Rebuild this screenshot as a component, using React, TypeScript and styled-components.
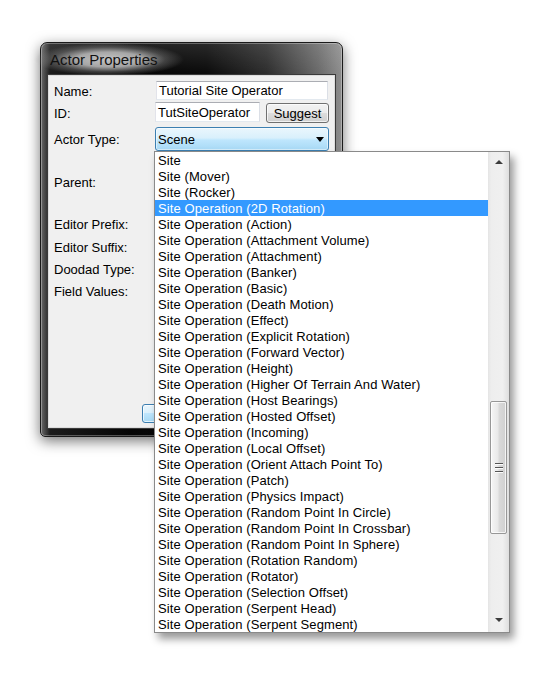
import React from "react";
import styled, { createGlobalStyle } from "styled-components";

const GlobalStyle = createGlobalStyle`
  html, body { margin: 0; padding: 0; background: #fff; }
  body {
    font-family: "Liberation Sans", Arial, sans-serif;
    font-size: 13px;
    color: #000;
  }
`;

const Desktop = styled.div`
  width: 550px;
  height: 675px;
  box-sizing: border-box;
  padding: 42px 0 0 40px;
  background: #fff;
`;

const Window = styled.div`
  width: 303px;
  height: 395px;
  box-sizing: border-box;
  display: flex;
  flex-direction: column;
  padding: 0 7px 8px 7px;
  border: 1px solid #1a1a1a;
  border-radius: 7px 7px 5px 5px;
  background:
    linear-gradient(to bottom, rgba(255,255,255,0.12), rgba(255,255,255,0) 30px),
    linear-gradient(to right, #6a6a6a 0%, #1c1c1c 3%, #050505 30%, #0c0c0c 55%, #2e2e2e 75%, #6a6a6a 92%, #8e8e8e 100%);
  box-shadow: inset 0 0 0 1px rgba(255, 255, 255, 0.3), 0 4px 14px rgba(0, 0, 0, 0.55);
`;

const TitleBar = styled.div`
  height: 32px;
  display: flex;
  align-items: center;
  padding-left: 2px;
`;

const Title = styled.span`
  font-size: 15px;
  color: #111;
  padding: 8px 26px 8px 16px;
  margin-left: -16px;
  background: radial-gradient(ellipse farthest-side, rgba(205, 205, 205, 0.95) 0%, rgba(190, 190, 190, 0.85) 45%, rgba(150, 150, 150, 0.35) 75%, rgba(120, 120, 120, 0) 100%);
  white-space: nowrap;
`;

const Client = styled.div`
  flex: 1;
  display: flex;
  flex-direction: column;
  box-sizing: border-box;
  background: #f0f0f0;
  border: 1px solid #dcdcdc;
  box-shadow: 0 0 0 1px #3a3a3a;
  padding: 5px 5px 4px 5px;
`;

const Row = styled.div<{ $h: number; $mt?: number }>`
  display: grid;
  grid-template-columns: 101px 1fr;
  align-items: stretch;
  height: ${(p) => p.$h}px;
  margin-top: ${(p) => p.$mt ?? 0}px;
`;

const Label = styled.div`
  display: flex;
  align-items: center;
  padding-top: 1px;
  white-space: nowrap;
`;

const FieldGroup = styled.div`
  display: flex;
  align-items: flex-start;
  gap: 6px;
  position: relative;
`;

const TextBox = styled.div<{ $w: number; $h: number; $ml?: number }>`
  width: ${(p) => p.$w}px;
  height: ${(p) => p.$h}px;
  margin-left: ${(p) => p.$ml ?? 0}px;
  box-sizing: border-box;
  background: #fff;
  border: 1px solid;
  border-color: #abadb3 #dbdfe6 #e3e9ef #e2e3ea;
  padding: 0 2px;
  display: flex;
  align-items: center;
  white-space: nowrap;
  overflow: hidden;
`;

const Button = styled.div<{ $w: number; $h: number; $mt?: number; $default?: boolean }>`
  width: ${(p) => p.$w}px;
  height: ${(p) => p.$h}px;
  margin-top: ${(p) => p.$mt ?? 0}px;
  box-sizing: border-box;
  border: 1px solid ${(p) => (p.$default ? "#3c7fb1" : "#707070")};
  border-radius: 3px;
  background: ${(p) =>
    p.$default
      ? "linear-gradient(#eaf6fd 0%, #d9f0fc 50%, #bee6fd 50%, #a7d9f5 100%)"
      : "linear-gradient(#f2f2f2 0%, #ebebeb 50%, #dddddd 50%, #cfcfcf 100%)"};
  box-shadow: inset 0 0 0 1px rgba(255, 255, 255, 0.7);
  display: flex;
  align-items: center;
  justify-content: center;
  white-space: nowrap;
`;

const ComboWrap = styled.div`
  position: relative;
  width: 174px;
  height: 24px;
`;

const Combo = styled.div`
  height: 100%;
  box-sizing: border-box;
  border: 1px solid #3c7fb1;
  border-radius: 3px;
  background: linear-gradient(#eaf6fd 0%, #d9f0fc 45%, #bee6fd 55%, #a7d9f5 100%);
  box-shadow: inset 0 0 0 1px rgba(255, 255, 255, 0.5);
  display: flex;
  align-items: center;
  padding: 0 4px 0 2px;
`;

const ComboText = styled.span`
  flex: 1;
`;

const DownTriangle = styled.span`
  width: 0;
  height: 0;
  border-left: 4.5px solid transparent;
  border-right: 4.5px solid transparent;
  border-top: 5px solid #000;
`;

const DropList = styled.div`
  position: absolute;
  top: 100%;
  left: -1px;
  z-index: 20;
  width: 356px;
  height: 482px;
  box-sizing: border-box;
  border: 1px solid #8a8a8a;
  background: #fff;
  display: flex;
  box-shadow: 4px 6px 8px rgba(0, 0, 0, 0.4);
`;

const Items = styled.div`
  flex: 1;
  display: flex;
  flex-direction: column;
`;

const Item = styled.div<{ $sel?: boolean }>`
  height: 16px;
  flex: none;
  line-height: 18px;
  padding-left: 3px;
  letter-spacing: 0.1px;
  white-space: nowrap;
  background: ${(p) => (p.$sel ? "#3399ff" : "transparent")};
  color: ${(p) => (p.$sel ? "#fff" : "#000")};
`;

const ScrollBar = styled.div`
  width: 21px;
  flex: none;
  display: flex;
  flex-direction: column;
  background: linear-gradient(to right, #e4e4e4 0%, #eeeeee 15%, #f0f0f0 70%, #dedede 100%);
`;

const ArrowBtn = styled.div<{ $h: number }>`
  height: ${(p) => p.$h}px;
  flex: none;
  display: flex;
  align-items: center;
  justify-content: center;
`;

const Arrow = styled.span<{ $up?: boolean }>`
  width: 0;
  height: 0;
  border-left: 4.5px solid transparent;
  border-right: 4.5px solid transparent;
  ${(p) => (p.$up ? "border-bottom: 4px solid #3c3c3c;" : "border-top: 4px solid #3c3c3c;")}
`;

const Track = styled.div`
  flex: 1;
  display: flex;
  flex-direction: column;
`;

const Thumb = styled.div<{ $offset: number; $len: number }>`
  margin-top: ${(p) => p.$offset}px;
  margin-left: 2px;
  width: 17px;
  height: ${(p) => p.$len}px;
  box-sizing: border-box;
  border: 1px solid #979797;
  border-radius: 2px;
  background: linear-gradient(to right, #f6f6f6 0%, #e9e9e9 45%, #d9d9d9 55%, #d0d0d0 100%);
  box-shadow: inset 0 0 0 1px rgba(255, 255, 255, 0.75);
  display: flex;
  align-items: center;
  justify-content: center;
`;

const Grip = styled.div`
  width: 8px;
  height: 10px;
  background: repeating-linear-gradient(
    to bottom,
    #555 0px,
    #555 1px,
    #fdfdfd 1px,
    #fdfdfd 2px,
    transparent 2px,
    transparent 4px
  );
`;

const Footer = styled.div`
  margin-top: auto;
  display: flex;
  gap: 7px;
  padding-left: 88px;
`;

const items = [
  "Site",
  "Site (Mover)",
  "Site (Rocker)",
  "Site Operation (2D Rotation)",
  "Site Operation (Action)",
  "Site Operation (Attachment Volume)",
  "Site Operation (Attachment)",
  "Site Operation (Banker)",
  "Site Operation (Basic)",
  "Site Operation (Death Motion)",
  "Site Operation (Effect)",
  "Site Operation (Explicit Rotation)",
  "Site Operation (Forward Vector)",
  "Site Operation (Height)",
  "Site Operation (Higher Of Terrain And Water)",
  "Site Operation (Host Bearings)",
  "Site Operation (Hosted Offset)",
  "Site Operation (Incoming)",
  "Site Operation (Local Offset)",
  "Site Operation (Orient Attach Point To)",
  "Site Operation (Patch)",
  "Site Operation (Physics Impact)",
  "Site Operation (Random Point In Circle)",
  "Site Operation (Random Point In Crossbar)",
  "Site Operation (Random Point In Sphere)",
  "Site Operation (Rotation Random)",
  "Site Operation (Rotator)",
  "Site Operation (Selection Offset)",
  "Site Operation (Serpent Head)",
  "Site Operation (Serpent Segment)",
];

export default function App() {
  return (
    <>
      <GlobalStyle />
      <Desktop>
        <Window>
          <TitleBar>
            <Title>Actor Properties</Title>
          </TitleBar>
          <Client>
            <Row $h={19}>
              <Label>Name:</Label>
              <FieldGroup>
                <TextBox $w={172} $h={19} $ml={1}>Tutorial Site Operator</TextBox>
              </FieldGroup>
            </Row>
            <Row $h={22} $mt={2}>
              <Label>ID:</Label>
              <FieldGroup>
                <TextBox $w={105} $h={20}>TutSiteOperator</TextBox>
                <Button $w={63} $h={20} $mt={1}>Suggest</Button>
              </FieldGroup>
            </Row>
            <Row $h={24} $mt={3}>
              <Label>Actor Type:</Label>
              <FieldGroup>
                <ComboWrap>
                  <Combo>
                    <ComboText>Scene</ComboText>
                    <DownTriangle />
                  </Combo>
                  <DropList>
                    <Items>
                      {items.map((t, i) => (
                        <Item key={t} $sel={i === 3}>
                          {t}
                        </Item>
                      ))}
                    </Items>
                    <ScrollBar>
                      <ArrowBtn $h={20}>
                        <Arrow $up />
                      </ArrowBtn>
                      <Track>
                        <Thumb $offset={229} $len={133}>
                          <Grip />
                        </Thumb>
                      </Track>
                      <ArrowBtn $h={24}>
                        <Arrow />
                      </ArrowBtn>
                    </ScrollBar>
                  </DropList>
                </ComboWrap>
              </FieldGroup>
            </Row>
            <Row $h={62}>
              <Label>Parent:</Label>
            </Row>
            <Row $h={22}>
              <Label>Editor Prefix:</Label>
            </Row>
            <Row $h={24}>
              <Label>Editor Suffix:</Label>
            </Row>
            <Row $h={20}>
              <Label>Doodad Type:</Label>
            </Row>
            <Row $h={24}>
              <Label>Field Values:</Label>
            </Row>
            <Footer>
              <Button $w={75} $h={19} $default />
            </Footer>
          </Client>
        </Window>
      </Desktop>
    </>
  );
}
